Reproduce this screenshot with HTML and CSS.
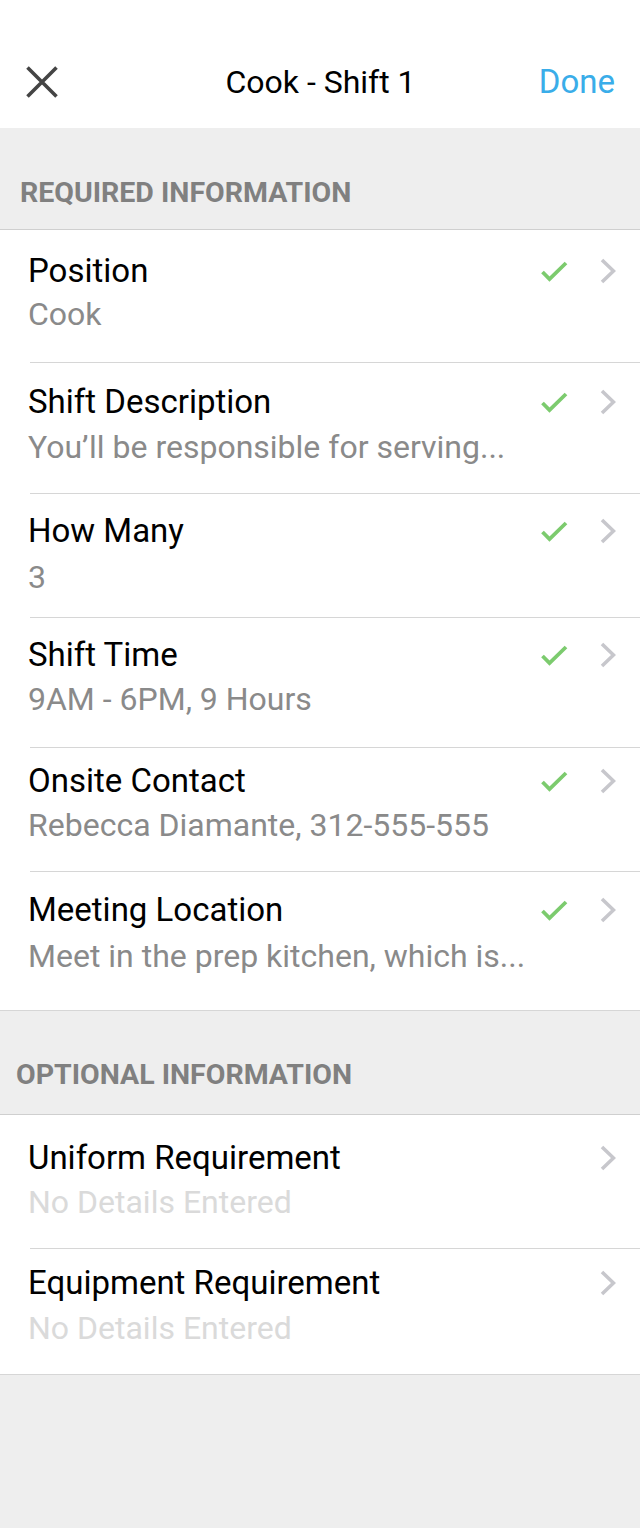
FILE: index.html
```html
<!DOCTYPE html>
<html>
<head>
<meta charset="utf-8">
<link rel="stylesheet" href="styles.css">
</head>
<body>
<div class="screen">
  <header class="nav">
    <button class="close" aria-label="Close">
      <svg width="32" height="32" viewBox="0 0 32 32"><path d="M1.5 1.5 L30.5 30.5 M30.5 1.5 L1.5 30.5" stroke="#444" stroke-width="3.6" fill="none"/></svg>
    </button>
    <div class="title">Cook - Shift 1</div>
    <div class="done">Done</div>
  </header>

  <div class="section-head required">REQUIRED INFORMATION</div>
  <ul class="list">
    <li class="row">
      <div class="text"><div class="label">Position</div><div class="value">Cook</div></div>
      <div class="icons">
        <svg class="check" width="27" height="21" viewBox="0 0 27 21"><path d="M1.5 11 L8.5 18 L25 2" stroke="#7ccb6e" stroke-width="3.8" fill="none"/></svg>
        <svg class="chev" width="16" height="26" viewBox="0 0 16 26"><path d="M2 2 L13.5 13 L2 24" stroke="#c7c7cc" stroke-width="3.6" fill="none"/></svg>
      </div>
    </li>
    <li class="row">
      <div class="text"><div class="label">Shift Description</div><div class="value">You’ll be responsible for serving...</div></div>
      <div class="icons">
        <svg class="check" width="27" height="21" viewBox="0 0 27 21"><path d="M1.5 11 L8.5 18 L25 2" stroke="#7ccb6e" stroke-width="3.8" fill="none"/></svg>
        <svg class="chev" width="16" height="26" viewBox="0 0 16 26"><path d="M2 2 L13.5 13 L2 24" stroke="#c7c7cc" stroke-width="3.6" fill="none"/></svg>
      </div>
    </li>
    <li class="row">
      <div class="text"><div class="label">How Many</div><div class="value">3</div></div>
      <div class="icons">
        <svg class="check" width="27" height="21" viewBox="0 0 27 21"><path d="M1.5 11 L8.5 18 L25 2" stroke="#7ccb6e" stroke-width="3.8" fill="none"/></svg>
        <svg class="chev" width="16" height="26" viewBox="0 0 16 26"><path d="M2 2 L13.5 13 L2 24" stroke="#c7c7cc" stroke-width="3.6" fill="none"/></svg>
      </div>
    </li>
    <li class="row">
      <div class="text"><div class="label">Shift Time</div><div class="value">9AM - 6PM, 9 Hours</div></div>
      <div class="icons">
        <svg class="check" width="27" height="21" viewBox="0 0 27 21"><path d="M1.5 11 L8.5 18 L25 2" stroke="#7ccb6e" stroke-width="3.8" fill="none"/></svg>
        <svg class="chev" width="16" height="26" viewBox="0 0 16 26"><path d="M2 2 L13.5 13 L2 24" stroke="#c7c7cc" stroke-width="3.6" fill="none"/></svg>
      </div>
    </li>
    <li class="row">
      <div class="text"><div class="label">Onsite Contact</div><div class="value">Rebecca Diamante, 312-555-555</div></div>
      <div class="icons">
        <svg class="check" width="27" height="21" viewBox="0 0 27 21"><path d="M1.5 11 L8.5 18 L25 2" stroke="#7ccb6e" stroke-width="3.8" fill="none"/></svg>
        <svg class="chev" width="16" height="26" viewBox="0 0 16 26"><path d="M2 2 L13.5 13 L2 24" stroke="#c7c7cc" stroke-width="3.6" fill="none"/></svg>
      </div>
    </li>
    <li class="row">
      <div class="text"><div class="label">Meeting Location</div><div class="value">Meet in the prep kitchen, which is...</div></div>
      <div class="icons">
        <svg class="check" width="27" height="21" viewBox="0 0 27 21"><path d="M1.5 11 L8.5 18 L25 2" stroke="#7ccb6e" stroke-width="3.8" fill="none"/></svg>
        <svg class="chev" width="16" height="26" viewBox="0 0 16 26"><path d="M2 2 L13.5 13 L2 24" stroke="#c7c7cc" stroke-width="3.6" fill="none"/></svg>
      </div>
    </li>
  </ul>

  <div class="section-head optional">OPTIONAL INFORMATION</div>
  <ul class="list optional-list">
    <li class="row">
      <div class="text"><div class="label">Uniform Requirement</div><div class="value empty">No Details Entered</div></div>
      <div class="icons">
        <svg class="chev" width="16" height="26" viewBox="0 0 16 26"><path d="M2 2 L13.5 13 L2 24" stroke="#c7c7cc" stroke-width="3.6" fill="none"/></svg>
      </div>
    </li>
    <li class="row">
      <div class="text"><div class="label">Equipment Requirement</div><div class="value empty">No Details Entered</div></div>
      <div class="icons">
        <svg class="chev" width="16" height="26" viewBox="0 0 16 26"><path d="M2 2 L13.5 13 L2 24" stroke="#c7c7cc" stroke-width="3.6" fill="none"/></svg>
      </div>
    </li>
  </ul>
</div>
</body>
</html>
```

FILE: styles.css
```css
* { box-sizing: border-box; }
html, body { margin: 0; padding: 0; }
body {
  background: #eeeeee;
  font-family: Roboto, "Liberation Sans", Arial, sans-serif;
  width: 640px;
  height: 1528px;
  overflow: hidden;
}
.screen { width: 640px; }

/* Navigation bar */
.nav {
  height: 128px;
  background: #fff;
  display: grid;
  grid-template-columns: 1fr auto 1fr;
  align-items: center;
  padding: 36px 25px 0 26px;
}
.close {
  border: 0;
  background: none;
  padding: 0;
  width: 32px;
  height: 32px;
  display: block;
  justify-self: start;
}
.close svg { display: block; }
.title {
  font-size: 32px;
  line-height: 40px;
  color: #000;
  text-align: center;
}
.done {
  font-size: 33px;
  line-height: 40px;
  color: #3aade9;
  justify-self: end;
}

/* Section headers */
.section-head {
  font-size: 28.5px;
  line-height: 34px;
  font-weight: 700;
  color: #808080;
  border-bottom: 1px solid #cfcfcf;
}
.section-head.required {
  height: 102px;
  padding: 48px 0 0 20px;
}
.section-head.optional {
  height: 104px;
  padding: 47px 0 0 16px;
}

/* Lists */
.list {
  list-style: none;
  margin: 0;
  padding: 0;
  background: #fff;
  border-bottom: 1px solid #d6d6d6;
}
.row {
  --h: 130px;
  --pt: 18px;
  --gap: 5px;
  height: var(--h);
  margin-left: 30px;
  padding-right: 24px;
  display: flex;
  justify-content: space-between;
  align-items: flex-start;
  border-bottom: 1px solid #d6d6d6;
}
.row:last-child { border-bottom: 0; }

.list .row:nth-child(1) { --h: 133px; --pt: 21px; --gap: 3px; }
.list .row:nth-child(2) { --h: 131px; --pt: 19px; --gap: 5px; }
.list .row:nth-child(3) { --h: 124px; --pt: 17px; --gap: 6px; }
.list .row:nth-child(4) { --h: 130px; --pt: 17px; --gap: 4px; }
.list .row:nth-child(5) { --h: 124px; --pt: 13px; --gap: 4px; }
.list .row:nth-child(6) { --h: 138px; --pt: 18px; --gap: 6px; }
.optional-list .row:nth-child(1) { --h: 134px; --pt: 23px; --gap: 4px; }
.optional-list .row:nth-child(2) { --h: 125px; --pt: 14px; --gap: 5px; }

.text {
  padding-top: var(--pt);
  margin-left: -2px;
}
.label {
  font-size: 33px;
  line-height: 40px;
  color: #000;
  white-space: nowrap;
}
.value {
  font-size: 32px;
  line-height: 40px;
  color: #8a8a8a;
  margin-top: var(--gap);
  white-space: nowrap;
}
.value.empty { color: #dadada; }

.icons {
  display: flex;
  align-items: center;
  gap: 32px;
  height: 40px;
  margin-top: var(--pt);
}
.icons svg { display: block; }
```
